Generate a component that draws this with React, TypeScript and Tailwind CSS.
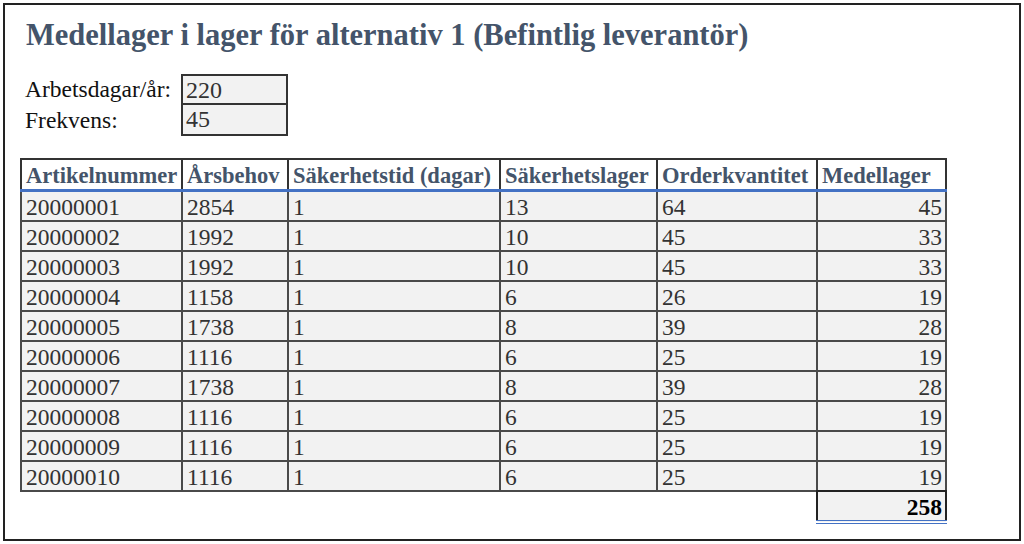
import React from "react";

const rows: [string, string, string, string, string, string][] = [
  ["20000001", "2854", "1", "13", "64", "45"],
  ["20000002", "1992", "1", "10", "45", "33"],
  ["20000003", "1992", "1", "10", "45", "33"],
  ["20000004", "1158", "1", "6", "26", "19"],
  ["20000005", "1738", "1", "8", "39", "28"],
  ["20000006", "1116", "1", "6", "25", "19"],
  ["20000007", "1738", "1", "8", "39", "28"],
  ["20000008", "1116", "1", "6", "25", "19"],
  ["20000009", "1116", "1", "6", "25", "19"],
  ["20000010", "1116", "1", "6", "25", "19"],
];

const headers = [
  "Artikelnummer",
  "Årsbehov",
  "Säkerhetstid (dagar)",
  "Säkerhetslager",
  "Orderkvantitet",
  "Medellager",
];

const widths = [161, 106, 212, 157, 160, 129];

export default function App() {
  return (
    <div
      className="w-[1024px] h-[544px] bg-white p-[3px]"
      style={{ fontFamily: '"Liberation Serif", "Times New Roman", serif' }}
    >
      <div className="h-full border-2 border-[#222] pl-[15px] pt-[14px]">
        <h1 className="text-[30.5px] leading-[32px] font-bold text-[#44546a] pl-[6px] whitespace-nowrap">
          Medellager i lager för alternativ 1 (Befintlig leverantör)
        </h1>

        <div className="mt-[23px] flex flex-col text-[23.5px] leading-[29px] text-[#111]">
          <div className="flex items-center">
            <div className="w-[161px] pl-[5px]">Arbetsdagar/år:</div>
            <div className="w-[107px] h-[31px] border-2 border-[#333] bg-[#f2f2f2] pl-[3px] text-[#333] text-[24px] leading-[29px]">
              220
            </div>
          </div>
          <div className="flex items-center">
            <div className="w-[161px] pl-[5px]">Frekvens:</div>
            <div className="w-[107px] h-[31px] border-2 border-t-0 border-[#333] bg-[#f2f2f2] pl-[3px] text-[#333] text-[24px] leading-[29px]">
              45
            </div>
          </div>
        </div>

        <table className="mt-[22px] table-fixed border-collapse w-[925px]">
          <colgroup>
            {widths.map((w, i) => (
              <col key={i} style={{ width: w }} />
            ))}
          </colgroup>
          <thead>
            <tr className="h-[31px]">
              {headers.map((h) => (
                <th
                  key={h}
                  className="border-2 border-[#333] border-b-[3px] border-b-[#4472c4] bg-white text-left pl-[4px] pr-0 text-[22.5px] leading-[26px] font-bold text-[#44546a] whitespace-nowrap align-bottom pb-0"
                >
                  {h}
                </th>
              ))}
            </tr>
          </thead>
          <tbody>
            {rows.map((r) => (
              <tr key={r[0]} className="h-[30px]">
                {r.map((c, i) => (
                  <td
                    key={i}
                    className={
                      "border-2 border-[#4a4a4a] bg-[#f2f2f2] text-[23.5px] leading-[25px] text-[#333] pt-[3px] pb-0 " +
                      (i === 5 ? "text-right pr-[3px]" : "text-left pl-[4px]")
                    }
                  >
                    {c}
                  </td>
                ))}
              </tr>
            ))}
            <tr className="h-[30px]">
              <td colSpan={5} className="border-0 p-0"></td>
              <td className="border-2 border-[#222] border-b-[4px] border-double border-b-[#4472c4] bg-[#f2f2f2] text-right pr-[3px] pt-[3px] text-[23.5px] leading-[25px] font-bold text-black">
                258
              </td>
            </tr>
          </tbody>
        </table>
      </div>
    </div>
  );
}
